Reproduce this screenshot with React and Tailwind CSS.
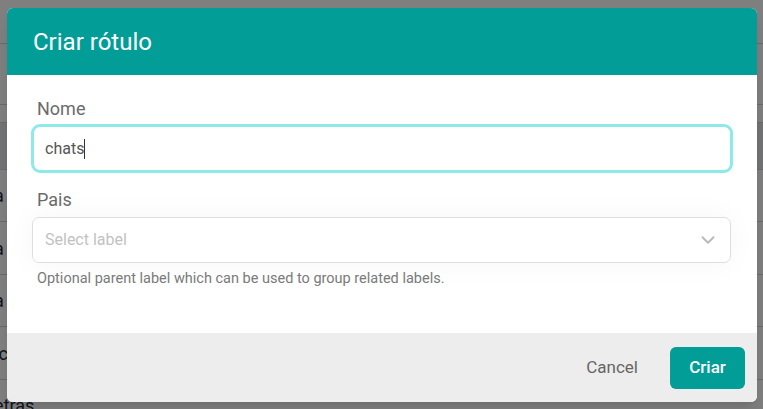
import { ChevronDown } from "lucide-react";

const rows = [
  { h: "h-[44px]", text: "", dark: false },
  { h: "h-[61px]", text: "", dark: false },
  { h: "h-[18px]", text: "", dark: false },
  { h: "h-[47px]", text: "", dark: true },
  { h: "h-[52px]", text: "a", dark: false },
  { h: "h-[53px]", text: "a", dark: false },
  { h: "h-[52px]", text: "a", dark: false },
  { h: "h-[53px]", text: "ic", dark: false },
  { h: "h-[40px]", text: "etras", dark: false },
];

export default function App() {
  return (
    <div className="relative w-[763px] h-[409px] overflow-hidden bg-white font-['Roboto',sans-serif]">
      {/* page behind the dialog */}
      <div className="flex flex-col">
        {rows.map((r, i) => (
          <div
            key={i}
            className={`${r.h} flex border-b border-gray-300 text-[18px] text-gray-800 ${
              r.dark ? "bg-gray-200" : ""
            } ${i === rows.length - 1 ? "items-start pt-[12px]" : "items-center"}`}
          >
            <span className="-ml-[6px]">{r.text}</span>
          </div>
        ))}
      </div>

      {/* overlay */}
      <div className="absolute inset-0 bg-black/50">
        <div className="ml-[7px] mt-[8px] w-[750px] h-[394px] rounded-md overflow-hidden bg-white flex flex-col shadow-lg">
          <div className="h-[67px] bg-[#019d96] flex items-center px-[26px]">
            <h2 className="text-[24px] text-white font-normal">Criar rótulo</h2>
          </div>

          <div className="flex-1 flex flex-col px-[24px] pt-[22px]">
            <label className="ml-[6px] text-[18px] text-[#6b6b6b] leading-[24px]">Nome</label>
            <div className="mt-[3px] h-[49px] rounded-[9px] border-[3px] border-[#8ee9e9] bg-white flex items-center px-[11px]">
              <span className="text-[16px] text-[#555]">chats</span>
              <span className="w-px h-[20px] bg-[#333]"></span>
            </div>

            <label className="ml-[6px] mt-[15px] text-[18px] text-[#6b6b6b] leading-[24px]">Pais</label>
            <div className="mt-[5px] ml-[1px] mr-[2px] h-[46px] rounded-[7px] border border-[#dedede] bg-white flex items-center justify-between pl-[12px] pr-[11px] shadow-[0_0_30px_rgba(0,0,0,0.04)]">
              <span className="text-[16px] text-[#c2c2c2]">Select label</span>
              <ChevronDown className="w-[22px] h-[22px] text-[#b8b8b8]" strokeWidth={2} />
            </div>
            <p className="ml-[6px] mt-[7px] text-[14.5px] leading-[18px] text-[#7a7a7a]">
              Optional parent label which can be used to group related labels.
            </p>
          </div>

          <div className="h-[69px] bg-[#ededed] flex items-center justify-end gap-[32px] pr-[12px]">
            <button className="text-[17px] text-[#666]">Cancel</button>
            <button className="h-[42px] w-[75px] rounded-[6px] bg-[#019d96] text-white text-[17px] font-medium">
              Criar
            </button>
          </div>
        </div>
      </div>
    </div>
  );
}
